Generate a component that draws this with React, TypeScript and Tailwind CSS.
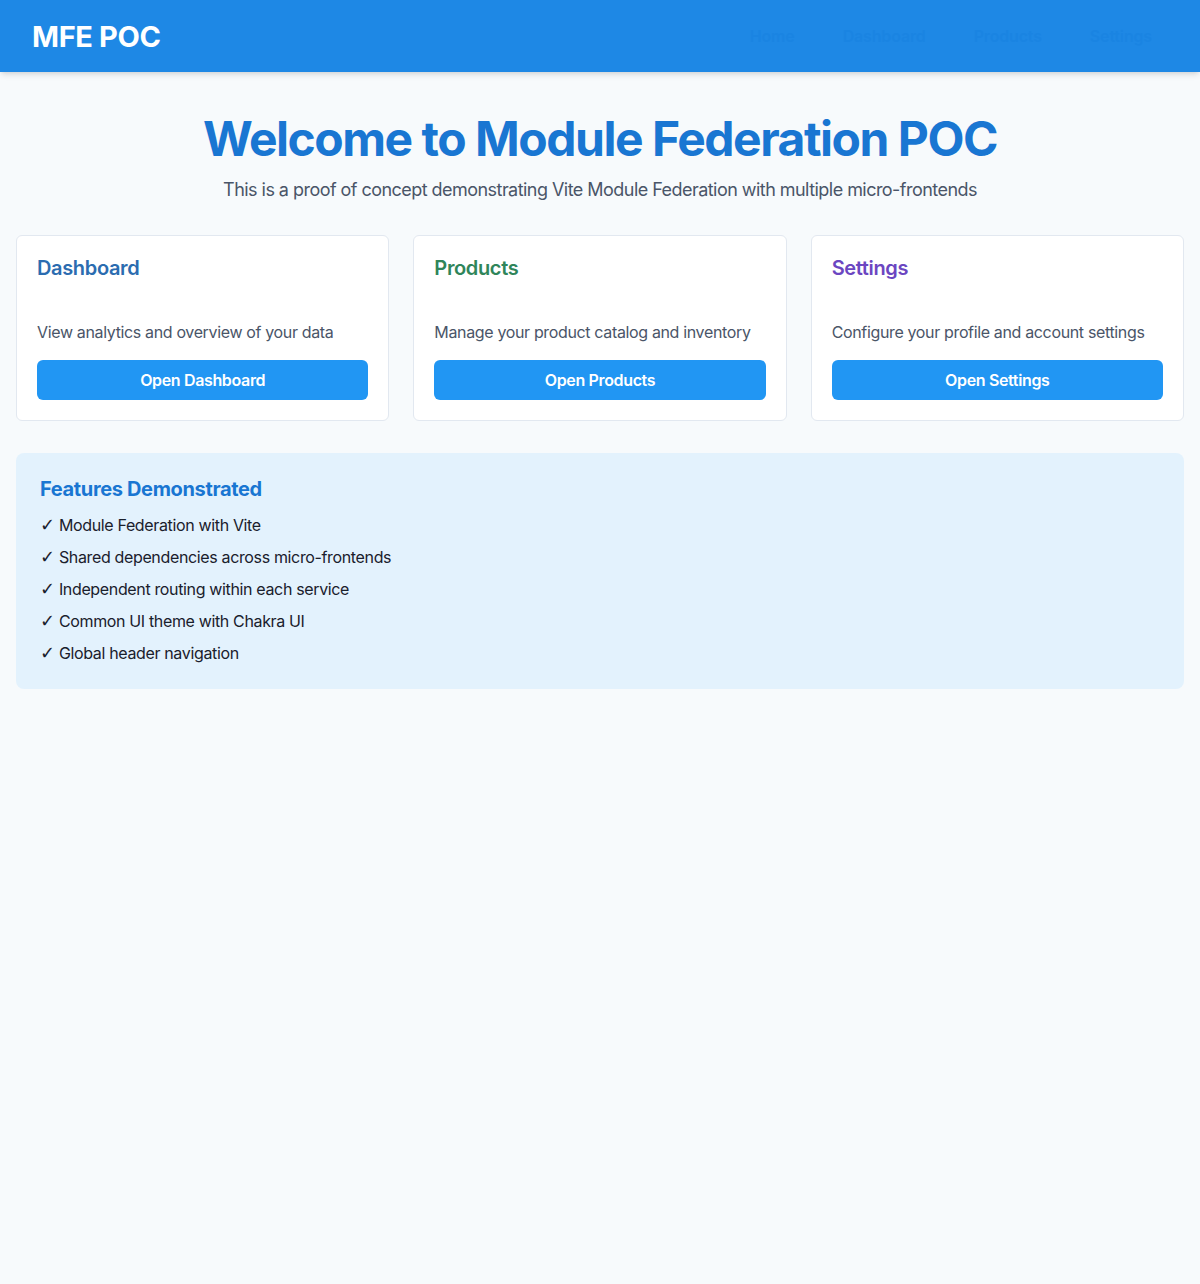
const cards = [
  {
    title: 'Dashboard',
    color: 'text-[#2b6cb0]',
    text: 'View analytics and overview of your data',
    button: 'Open Dashboard',
  },
  {
    title: 'Products',
    color: 'text-[#2f855a]',
    text: 'Manage your product catalog and inventory',
    button: 'Open Products',
  },
  {
    title: 'Settings',
    color: 'text-[#6b46c1]',
    text: 'Configure your profile and account settings',
    button: 'Open Settings',
  },
]

const features = [
  'Module Federation with Vite',
  'Shared dependencies across micro-frontends',
  'Independent routing within each service',
  'Common UI theme with Chakra UI',
  'Global header navigation',
]

const NAV = ['Home', 'Dashboard', 'Products', 'Settings']

export default function App() {
  return (
    <div className="min-h-[1284px] bg-[#f7fafc] font-['Inter',sans-serif] text-[#1a202c] tracking-[-0.022em]">
      <header className="h-[72px] bg-[#1e88e5] px-8 flex items-center justify-between shadow-md">
        <div className="text-[29px] font-bold text-white leading-none">MFE POC</div>
        <nav className="flex items-center gap-4">
          {NAV.map((n) => (
            <button
              key={n}
              type="button"
              className="h-10 px-4 rounded-md text-base font-semibold tracking-[-0.01em] text-[#1a84e2]"
            >
              {n}
            </button>
          ))}
        </nav>
      </header>

      <main className="px-4 pt-[38px]">
        <div className="text-center mb-8">
          <h1 className="text-[48px] font-bold leading-[1.2] tracking-[-0.031em] text-[#1976d2] mb-2">
            Welcome to Module Federation POC
          </h1>
          <p className="text-lg leading-[1.5] tracking-[-0.03em] text-[#4a5568]">
            This is a proof of concept demonstrating Vite Module Federation with multiple micro-frontends
          </p>
        </div>

        <div className="grid grid-cols-3 gap-6">
          {cards.map((c) => (
            <div key={c.title} className="bg-white border border-[#e2e8f0] rounded-md p-5">
              <h2 className={`text-xl font-semibold leading-[1.2] ${c.color}`}>{c.title}</h2>
              <p className="mt-10 text-base leading-6 text-[#4a5568]">{c.text}</p>
              <button
                type="button"
                className="mt-4 w-full h-10 rounded-md bg-[#2196f3] text-white text-base font-semibold"
              >
                {c.button}
              </button>
            </div>
          ))}
        </div>

        <div className="mt-8 bg-[#e3f2fd] rounded-lg p-6">
          <h3 className="text-xl font-bold leading-[1.2] text-[#1976d2]">Features Demonstrated</h3>
          <ul className="mt-3 flex flex-col gap-2">
            {features.map((f) => (
              <li key={f} className="h-6 text-base leading-6 text-[#1a202c]">
                <span className="font-['DejaVu_Sans',sans-serif] text-[18px] leading-none">✓</span> {f}
              </li>
            ))}
          </ul>
        </div>
      </main>
    </div>
  )
}
